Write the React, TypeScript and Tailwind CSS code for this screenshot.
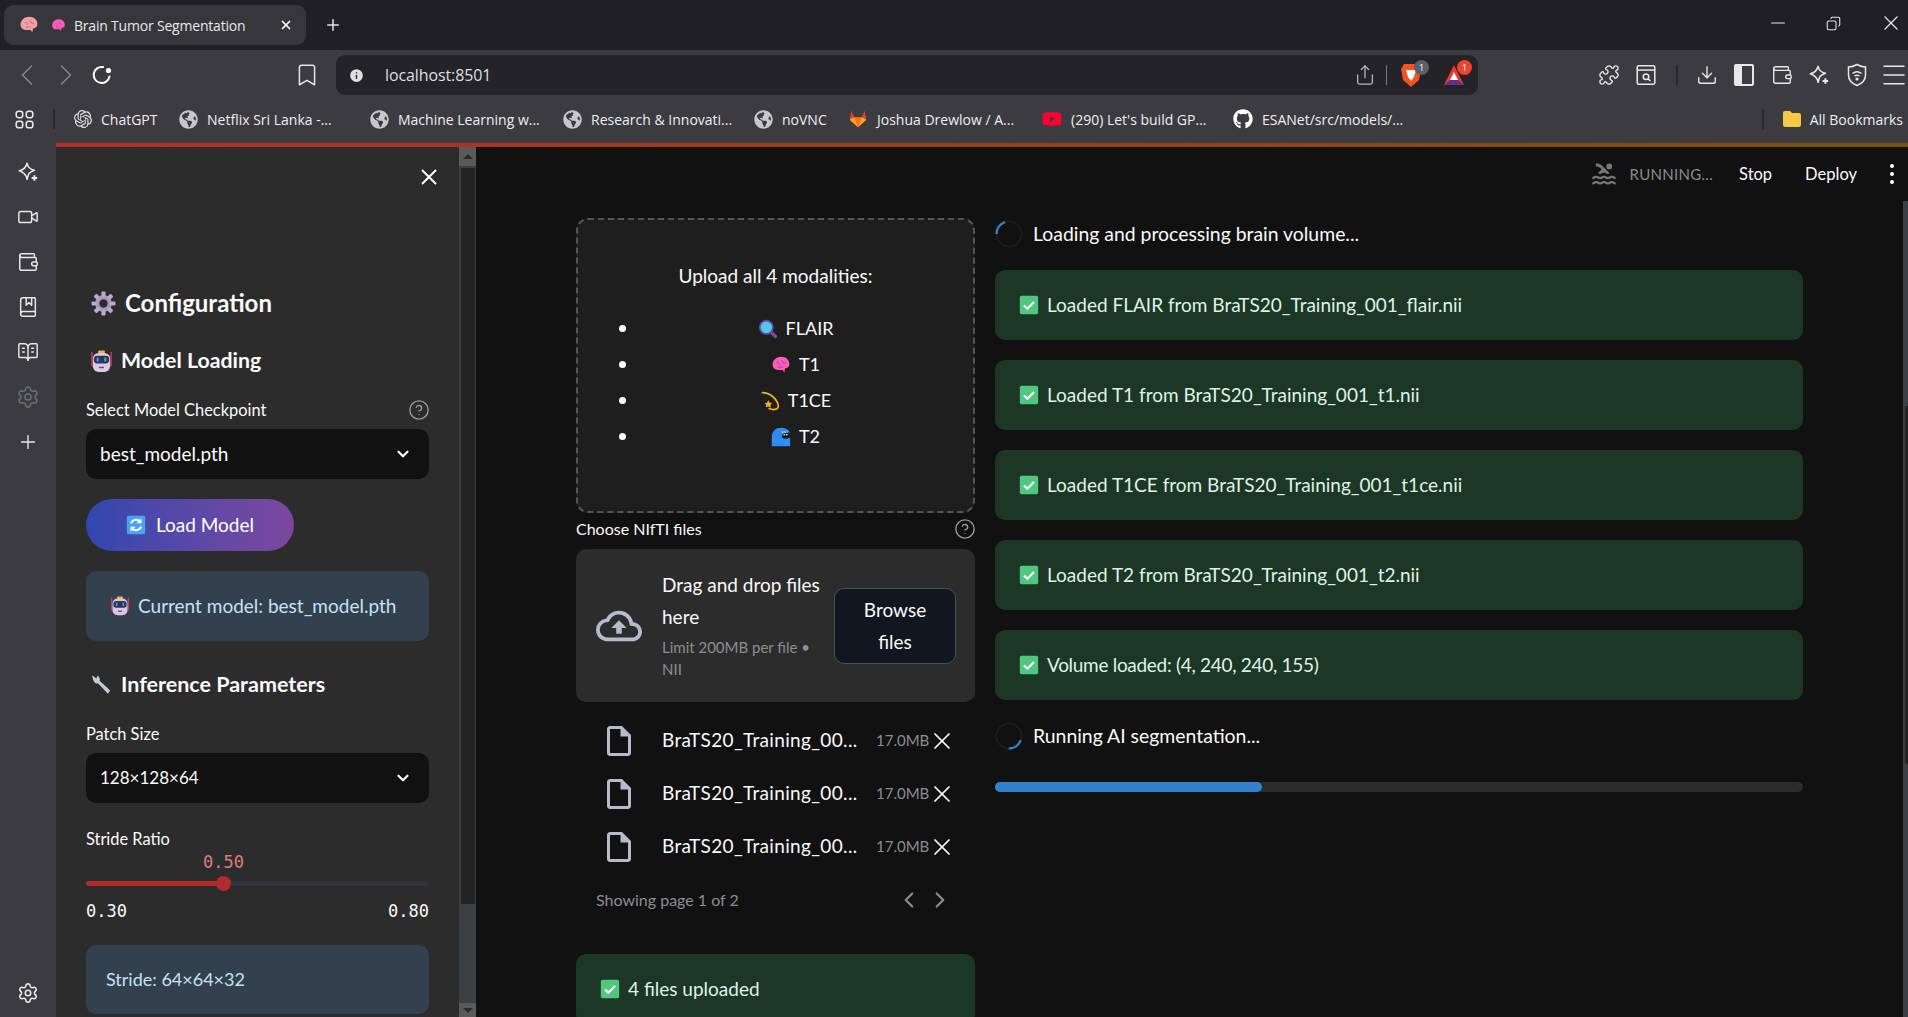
import { ChevronDown, ChevronLeft, ChevronRight, X, Plus, Minus, Copy, CircleHelp, Settings, Bookmark, Share, Puzzle, Download, Wallet, Video, BookMarked, BookOpenText, Menu, Info } from 'lucide-react'
import { FaGithub, FaGlobeAmericas, FaYoutube } from 'react-icons/fa'
import { SiOpenai } from 'react-icons/si'
import { MdOutlineCloudUpload, MdOutlineInsertDriveFile, MdPool } from 'react-icons/md'

const bookmarks = [
  { name: 'ChatGPT', icon: <SiOpenai className="w-[18px] h-[18px] text-[#e4e4e6]" />, w: 'w-[105px]' },
  { name: 'Netflix Sri Lanka -...', icon: <FaGlobeAmericas className="w-[19px] h-[19px] text-[#c8c8cc]" />, w: 'w-[191px]' },
  { name: 'Machine Learning w...', icon: <FaGlobeAmericas className="w-[19px] h-[19px] text-[#c8c8cc]" />, w: 'w-[193px]' },
  { name: 'Research & Innovati...', icon: <FaGlobeAmericas className="w-[19px] h-[19px] text-[#c8c8cc]" />, w: 'w-[191px]' },
  { name: 'noVNC', icon: <FaGlobeAmericas className="w-[19px] h-[19px] text-[#c8c8cc]" />, w: 'w-[94px]' },
  { name: 'Joshua Drewlow / A...', icon: <GitlabLogo />, w: 'w-[194px]' },
  { name: "(290) Let's build GP...", icon: <FaYoutube className="w-[20px] h-[20px] text-[#ff0033]" />, w: 'w-[191px]' },
  { name: 'ESANet/src/models/...', icon: <FaGithub className="w-[20px] h-[20px] text-white" />, w: 'w-[200px]' },
]

function GitlabLogo() {
  return (
    <svg viewBox="0 0 24 24" className="w-[20px] h-[22px] shrink-0">
      <path d="M12 22 2 13l2-11 3.500 8h9L20 2l2 11z" fill="#e24329" />
      <path d="M12 22 7.500 10h9z" fill="#fc6d26" />
      <path d="M12 22 2 13l1.500-1L7.500 10zM12 22l10-9-1.500-1-4-2z" fill="#fca326" />
    </svg>
  )
}

function Sparkle({ className }: { className?: string }) {
  return (
    <svg viewBox="0 0 24 24" fill="none" stroke="currentColor" strokeWidth="1.700" strokeLinejoin="round" className={className}>
      <path d="M11 2.500c.8 4.300 2.700 6.500 8 7.700-3.600 1.300-4.800 2-6 3.500-.8 1.200-1.200 3-2 6.300-.9-5.300-3-7.600-8.500-9.300C8 9.300 10 7 11 2.500z" />
      <path d="M19 15.500v6M16 18.500h6" strokeWidth="2.200" />
    </svg>
  )
}

function BrainEmoji({ className, pale }: { className?: string; pale?: boolean }) {
  const fill = pale ? '#f2a0a6' : '#f45fb8'
  const dark = pale ? '#d9737d' : '#d63f9c'
  return (
    <svg viewBox="0 0 24 24" className={className}>
      <path d="M2 13C1 7 6 2 12 2s11 4 10 10c-.5 3-3 4-5 4l-1 5-2-3H8c-3 0-5.500-2-6-5z" fill={fill} />
      <path d="M7 8c2 1 3 2 3 4M13 6c0 3 2 4 5 4M8 15c2-1 4-1 6 0" stroke={dark} strokeWidth="1.300" fill="none" />
    </svg>
  )
}

function GearEmoji({ className }: { className?: string }) {
  return (
    <svg viewBox="0 0 24 24" className={className}>
      <circle cx="12" cy="12" r="8" fill="#a998c0" />
      {[0, 45, 90, 135, 180, 225, 270, 315].map(a => (
        <rect key={a} x="10" y="0.500" width="4" height="5" rx="1" fill="#b9aacd" transform={`rotate(${a} 12 12)`} />
      ))}
      <circle cx="12" cy="12" r="4" fill="#2c2c2c" />
    </svg>
  )
}

function RobotEmoji({ className }: { className?: string }) {
  return (
    <svg viewBox="0 0 24 24" className={className}>
      <path d="M2 2v15M22 2v15" stroke="#e6365f" strokeWidth="1.400" />
      <rect x="8.500" y="0.500" width="7" height="3" rx="1" fill="#f4b23e" />
      <rect x="3" y="3" width="18" height="20" rx="6" fill="#dcc8e6" />
      <rect x="4" y="6" width="16" height="8" rx="3.500" fill="#2f3550" />
      <rect x="7" y="8" width="2" height="4" fill="#39a9f2" />
      <rect x="15" y="8" width="2" height="4" fill="#39a9f2" />
      <rect x="9.500" y="17.500" width="5" height="1.500" fill="#5b4a68" />
    </svg>
  )
}

function RefreshEmoji({ className }: { className?: string }) {
  return (
    <svg viewBox="0 0 24 24" className={className}>
      <rect x="1" y="1" width="22" height="22" rx="2" fill="#4aa3f0" />
      <path d="M6 10a6.500 6.500 0 0 1 11-2M18 14a6.500 6.500 0 0 1-11 2" stroke="#fff" strokeWidth="2.400" fill="none" />
      <path d="M18.500 4v6h-6zM5.500 20v-6h6z" fill="#fff" />
    </svg>
  )
}

function WrenchEmoji({ className }: { className?: string }) {
  return (
    <svg viewBox="0 0 24 24" className={className}>
      <path d="M2.500 2.500 7 6l1-3c2 1 3.500 3 2.500 5.500L22 19l-2.500 3.500L9 11.500C6 12 3 10 2.500 2.500z" fill="#c5cbd6" />
    </svg>
  )
}

function MagnifierEmoji({ className }: { className?: string }) {
  return (
    <svg viewBox="0 0 24 24" className={className}>
      <path d="M15 15l6 6" stroke="#7a4a93" strokeWidth="4" strokeLinecap="round" />
      <circle cx="10" cy="10" r="8" fill="#55c5e8" stroke="#5b4aa3" strokeWidth="2" />
    </svg>
  )
}

function CometEmoji({ className }: { className?: string }) {
  return (
    <svg viewBox="0 0 24 24" className={className}>
      <path d="M3 2c8 0 18 7 19 16 0 5-7 5-11 3" stroke="#f5b01e" strokeWidth="2" fill="none" strokeLinecap="round" />
      <path d="M10 11l1.500 3 3 .5-2 2.500.5 3-3-1.500-3 1 .5-3-2-2 3-.5z" fill="#f5b01e" />
    </svg>
  )
}

function WaveEmoji({ className }: { className?: string }) {
  return (
    <svg viewBox="0 0 24 24" className={className}>
      <path d="M1 23V12C1 5 6 1 12 1c5 0 9 2 11 6-5-1-9 0-10 4-.5 3 4 4 10 2v10z" fill="#2f8cf0" />
      <path d="M13 6h7M15 9h6" stroke="#c9e6fb" strokeWidth="1.500" strokeDasharray="2 1" />
    </svg>
  )
}

function CheckEmoji({ className }: { className?: string }) {
  return (
    <svg viewBox="0 0 24 24" className={className}>
      <rect x="1" y="1" width="22" height="22" rx="2" fill="#4fc77f" />
      <path d="M6 12.500l4 4 8-8" stroke="#fff" strokeWidth="2.600" fill="none" />
    </svg>
  )
}

function Spinner({ rotate }: { rotate: string }) {
  return (
    <svg viewBox="0 0 28 28" className={`w-[28px] h-[28px] shrink-0 ${rotate}`}>
      <circle cx="14" cy="14" r="12.500" stroke="#1a1c20" strokeWidth="2" fill="none" />
      <path d="M1.500 14A12.500 12.500 0 0 1 10 2.200" stroke="#3182cc" strokeWidth="2.400" fill="none" />
    </svg>
  )
}

function SelectBox({ value, size }: { value: string; size: string }) {
  return (
    <div className={`h-[50px] rounded-[10px] bg-[#111111] pl-[14px] pr-[17px] flex items-center justify-between text-[#fafafa] ${size}`}>
      <span>{value}</span>
      <ChevronDown className="w-[18px] h-[18px]" strokeWidth={3} />
    </div>
  )
}

function Alert({ text, tight }: { text: string; tight?: boolean }) {
  return (
    <div className="h-[70px] rounded-[10px] bg-[#1c3726] px-[24px] flex items-center gap-[8px] text-[19px] text-[#dff3e4]">
      <CheckEmoji className="w-[20px] h-[20px] shrink-0" />
      <span className={tight ? 'tracking-[-0.3px]' : ''}>{text}</span>
    </div>
  )
}

function FileRow() {
  return (
    <div className="h-[53px] flex items-center pl-[25px]">
      <MdOutlineInsertDriveFile className="w-[36px] h-[36px] text-[#b8bacb] shrink-0" />
      <span className="ml-[25px] w-[200px] shrink-0 text-[19px] tracking-[0.35px] text-[#fafafa] whitespace-nowrap">BraTS20_Training_00...</span>
      <span className="ml-[14px] text-[15px] text-[#8c8d92]">17.0MB</span>
      <X className="w-[28px] h-[28px] -ml-[1px] shrink-0 text-white" strokeWidth={1.500} />
    </div>
  )
}

export default function App() {
  return (
    <div className="w-[1908px] h-[1017px] overflow-hidden flex flex-col bg-[#111111] font-['Lato',sans-serif]">
      {/* tab strip */}
      <div className="h-[50px] bg-[#1f1f24] flex items-center pl-[4px] shrink-0 font-['Open_Sans',sans-serif]">
        <div className="w-[302px] h-[40px] rounded-[9px] bg-[#36363b] flex items-center pl-[15px] pr-[13px] text-[14px] text-[#e8e8ea]">
          <BrainEmoji pale className="w-[20px] h-[20px] shrink-0" />
          <BrainEmoji className="w-[15px] h-[15px] shrink-0 ml-[12px]" />
          <span className="ml-[8px] tracking-[-0.2px] whitespace-nowrap">Brain Tumor Segmentation</span>
          <X className="w-[14px] h-[14px] ml-auto text-white" strokeWidth={3} />
        </div>
        <Plus className="w-[18px] h-[18px] ml-[18px] text-[#e4e4e6]" />
        <div className="ml-auto mb-[4px] flex items-center text-[#e6e6e8]">
          <Minus className="w-[22px] h-[22px]" strokeWidth={1.300} />
          <Copy className="w-[15px] h-[15px] ml-[37px] -scale-x-100" strokeWidth={1.700} />
          <X className="w-[24px] h-[24px] ml-[38px] mr-[5px]" strokeWidth={1.300} />
        </div>
      </div>

      {/* toolbar */}
      <div className="h-[45px] pt-[5px] bg-[#3b3b40] flex items-center shrink-0 font-['Open_Sans',sans-serif]">
        <ChevronLeft className="w-[36px] h-[36px] shrink-0 ml-[9px] text-[#85858a]" strokeWidth={1} />
        <ChevronRight className="w-[36px] h-[36px] shrink-0 ml-[3px] text-[#85858a]" strokeWidth={1} />
        <svg viewBox="0 0 24 24" fill="none" className="w-[24px] h-[24px] shrink-0 ml-[6px] text-white">
          <path d="M19.500 13.500A8 8 0 1 1 13 4.100" stroke="currentColor" strokeWidth="2" strokeLinecap="round" />
          <circle cx="18.500" cy="7.500" r="2.600" fill="currentColor" />
        </svg>
        <Bookmark className="w-[26px] h-[26px] shrink-0 ml-[180px] text-[#e4e4e6]" strokeWidth={1.400} />
        <div className="w-[1142px] h-[40px] shrink-0 ml-[16px] rounded-[9px] bg-[#232328] flex items-center text-[#dfdfe2] text-[16px] pl-[12px]">
          <Info className="w-[17px] h-[17px] fill-[#dedee0] text-[#232328]" />
          <span className="ml-[20px] tracking-[-0.1px]">localhost:8501</span>
          <Share className="w-[22px] h-[22px] ml-auto text-[#b8b8bc]" strokeWidth={1.400} />
          <div className="w-px h-[20px] bg-[#77777c] ml-[10px]" />
          <div className="relative ml-[14px] w-[20px] h-[24px]">
            <svg viewBox="0 0 20 24" className="w-[20px] h-[24px]">
              <path d="M3 1h14l3 5-2 11-8 7-8-7L0 6z" fill="#f1541e" />
              <path d="M5 7h10l-2 7-3 4-3-4z" fill="#fff" />
            </svg>
            <span className="absolute -top-[3px] left-[13px] w-[15px] h-[15px] rounded-full bg-[#5c5e69] text-[9px] leading-[15px] text-center text-white">1</span>
          </div>
          <div className="relative ml-[23px] w-[20px] h-[20px]">
            <svg viewBox="0 0 20 20" className="w-[20px] h-[20px]">
              <path d="M10 0 20 20H0z" fill="#e6392f" />
              <path d="M10 7l4 8H6z" fill="#fff" />
              <path d="M0 20l6-5h8l6 5z" fill="#662d91" />
            </svg>
            <span className="absolute -top-[5px] left-[13px] w-[15px] h-[15px] rounded-full bg-[#f0432f] text-[9px] leading-[15px] text-center text-white">1</span>
          </div>
          <div className="w-[14px] shrink-0" />
        </div>
        <div className="flex items-center shrink-0 ml-[112px] text-[#e8e8ea] [&>div]:flex [&>div]:justify-center [&>div]:w-[37.5px]">
          <div><Puzzle className="w-[22px] h-[22px]" strokeWidth={1.500} /></div>
          <div>
            <svg viewBox="0 0 20 20" fill="none" stroke="currentColor" strokeWidth="1.400" className="w-[22px] h-[22px]">
              <rect x="2" y="1.500" width="16" height="17" rx="1.500" />
              <path d="M2 5.500h16" />
              <circle cx="10" cy="11.500" r="2.500" />
              <path d="M12 13.500l2 2" />
            </svg>
          </div>
          <span className="w-[23px] flex justify-center"><span className="w-[2px] h-[20px] bg-[#29292d]" /></span>
          <div><Download className="w-[22px] h-[22px]" strokeWidth={1.500} /></div>
          <div><span className="w-[20px] h-[22px] border-2 border-[#e8e8ea] rounded-[2px] bg-gradient-to-r from-[#e8e8ea] from-40% to-transparent to-40%" /></div>
          <div><Wallet className="w-[22px] h-[22px]" strokeWidth={1.500} /></div>
          <div><Sparkle className="w-[22px] h-[22px]" /></div>
          <div>
            <svg viewBox="0 0 24 24" fill="none" stroke="currentColor" strokeWidth="1.500" className="w-[24px] h-[24px]">
              <path d="M12 1.500c3 1.700 5.500 2.500 8.500 2.500v8c0 5-3.500 8.500-8.500 10.500C7 20.500 3.500 17 3.500 12V4c3 0 5.500-.8 8.500-2.500z" />
              <path d="M7.500 10.500c2.700-2.200 6.300-2.200 9 0M9.500 13c1.500-1 3.500-1 5 0" />
              <circle cx="12" cy="16" r="0.800" fill="currentColor" />
            </svg>
          </div>
          <div><Menu className="w-[30px] h-[30px] shrink-0" strokeWidth={1.200} /></div>
        </div>
      </div>

      {/* bookmarks */}
      <div className="h-[48px] bg-[#3b3b40] flex items-center text-[14px] text-[#eeeef0] shrink-0 font-['Open_Sans',sans-serif]">
        <svg viewBox="0 0 16 16" fill="none" stroke="#e8e8ea" strokeWidth="1.300" className="w-[19px] h-[19px] ml-[15px]">
          <rect x="1" y="1" width="5.500" height="5.500" rx="2" />
          <rect x="9.500" y="1" width="5.500" height="5.500" rx="2" />
          <rect x="1" y="9.500" width="5.500" height="5.500" rx="2" />
          <rect x="9.500" y="9.500" width="5.500" height="5.500" rx="2" />
        </svg>
        <div className="w-[2px] h-[20px] bg-[#29292d] ml-[19px] mr-[19px]" />
        {bookmarks.map(b => (
          <div key={b.name} className={`${b.w} flex items-center gap-[9px] shrink-0 whitespace-nowrap`}>
            {b.icon}
            <span>{b.name}</span>
          </div>
        ))}
        <div className="ml-auto w-[2px] h-[20px] bg-[#29292d]" />
        <svg viewBox="0 0 20 18" className="w-[20px] h-[18px] ml-[18px]">
          <path d="M1 3a2 2 0 0 1 2-2h5l2 2h7a2 2 0 0 1 2 2v10a2 2 0 0 1-2 2H3a2 2 0 0 1-2-2z" fill="#f6c945" />
        </svg>
        <span className="ml-[8px] mr-[5px] whitespace-nowrap">All Bookmarks</span>
      </div>

      <div className="flex-1 min-h-0 flex">
        {/* brave side rail */}
        <div className="w-[56px] bg-[#3b3b40] flex flex-col items-center pt-[18px] pb-[13px] text-[#e8e8ea] shrink-0">
          <Sparkle className="w-[22px] h-[22px]" />
          <Video className="w-[22px] h-[22px] mt-[23px]" strokeWidth={1.600} />
          <Wallet className="w-[22px] h-[22px] mt-[23px]" strokeWidth={1.600} />
          <BookMarked className="w-[22px] h-[22px] mt-[23px]" strokeWidth={1.600} />
          <BookOpenText className="w-[22px] h-[22px] mt-[23px]" strokeWidth={1.600} />
          <Settings className="w-[24px] h-[24px] mt-[22px] text-[#6b6f7c]" strokeWidth={1.500} />
          <Plus className="w-[22px] h-[22px] mt-[22px]" strokeWidth={1.500} />
          <Settings className="w-[22px] h-[22px] mt-auto" strokeWidth={1.700} />
        </div>

        <div className="flex-1 min-w-0 flex flex-col">
          <div className="h-[4px] shrink-0 bg-gradient-to-r from-[#b52c24] via-[#9a3f1c] to-[#7c5010]" />
          <div className="flex-1 min-h-0 flex">
            {/* streamlit sidebar */}
            <div className="w-[403px] shrink-0 bg-[#2c2c2c] px-[30px] text-[#fafafa]">
              <div className="h-[38px] flex justify-end pt-[17px] -mr-[13px]">
                <X className="w-[26px] h-[26px] shrink-0 text-white" strokeWidth={1.800} />
              </div>
              <div className="mt-[103px] flex items-center h-[30px] pl-[5px] gap-[9px] text-[24px] font-bold whitespace-nowrap">
                <GearEmoji className="w-[25px] h-[25px]" />
                <span>Configuration</span>
              </div>
              <div className="mt-[28px] flex items-center h-[30px] pl-[4px] gap-[8px] text-[21.300px] font-bold whitespace-nowrap">
                <RobotEmoji className="w-[23px] h-[23px]" />
                <span>Model Loading</span>
              </div>
              <div className="mt-[21px] h-[26px] flex items-center justify-between text-[16.400px]">
                <span>Select Model Checkpoint</span>
                <CircleHelp className="w-[22px] h-[22px] -mr-[1px] text-[#9a9a9e]" strokeWidth={1.500} />
              </div>
              <div className="mt-[6px]"><SelectBox value="best_model.pth" size="text-[19px]" /></div>
              <div className="mt-[20px] w-[208px] h-[52px] rounded-full bg-gradient-to-r from-[#2f46b0] to-[#7c479e] flex items-center justify-center gap-[10px] text-[19px] text-white">
                <RefreshEmoji className="w-[20px] h-[20px]" />
                <span>Load Model</span>
              </div>
              <div className="mt-[20px] h-[70px] rounded-[10px] bg-[#33404d] flex items-center pl-[24px] gap-[8px] text-[19px] text-[#c7e1f5] whitespace-nowrap">
                <RobotEmoji className="w-[20px] h-[20px]" />
                <span>Current model: best_model.pth</span>
              </div>
              <div className="mt-[28px] flex items-center h-[30px] pl-[4px] gap-[9px] text-[21.500px] font-bold whitespace-nowrap">
                <WrenchEmoji className="w-[22px] h-[22px]" />
                <span>Inference Parameters</span>
              </div>
              <div className="mt-[22px] h-[26px] flex items-center text-[16.400px]">Patch Size</div>
              <div className="mt-[6px]"><SelectBox value="128×128×64" size="text-[17px]" /></div>
              <div className="mt-[23px] h-[26px] flex items-center text-[16.400px]">Stride Ratio</div>
              <div className="relative h-[93px] -mt-[1px] font-['DejaVu_Sans_Mono',monospace] text-[17px]">
                <div className="absolute left-[117px] -top-[1px] text-[#de7c7c] leading-[24px]">0.50</div>
                <div className="absolute left-0 right-0 top-[30px] h-[5px] rounded-full bg-[#33353b]" />
                <div className="absolute left-0 w-[137px] top-[30px] h-[5px] rounded-full bg-[#b22a2a]" />
                <div className="absolute left-[130px] top-[25px] w-[15px] h-[15px] rounded-full bg-[#b22a2a]" />
                <div className="absolute left-0 top-[48px] leading-[24px]">0.30</div>
                <div className="absolute right-0 top-[48px] leading-[24px]">0.80</div>
              </div>
              <div className="mt-[1px] h-[69px] rounded-[10px] bg-[#33404d] flex items-center pl-[20px] text-[18px] text-[#c7e1f5]">Stride: 64×64×32</div>
            </div>

            {/* sidebar scrollbar */}
            <div className="w-[17px] shrink-0 bg-[#3d4043] flex flex-col">
              <div className="h-[19px] bg-[#5a5a5a] flex items-center justify-center">
                <div className="w-0 h-0 border-x-[5px] border-x-transparent border-b-[5px] border-b-[#2c2c2c]" />
              </div>
              <div className="h-[2px]" />
              <div className="h-[736px] ml-[2px] mr-[1px] bg-[#232323]" />
              <div className="flex-1" />
              <div className="h-[14px] bg-[#5a5a5a] flex items-center justify-center">
                <div className="w-0 h-0 border-x-[5px] border-x-transparent border-t-[5px] border-t-[#2c2c2c]" />
              </div>
            </div>

            {/* main area */}
            <div className="relative flex-1 min-w-0 bg-[#111111] pt-[71px] pl-[100px] pr-[105px] text-[#fafafa]">
              <div className="absolute top-[4px] right-0 h-[46px] flex items-center text-[16.500px]">
                <MdPool className="w-[28px] h-[28px] text-[#777]" />
                <span className="ml-[12px] text-[#8a8a8f] tracking-[0.3px] text-[15px]">RUNNING...</span>
                <span className="ml-[26px]">Stop</span>
                <span className="ml-[33px]">Deploy</span>
                <div className="ml-[33px] mr-[14px] flex flex-col gap-[4px]">
                  <div className="w-[4px] h-[4px] rounded-full bg-white" />
                  <div className="w-[4px] h-[4px] rounded-full bg-white" />
                  <div className="w-[4px] h-[4px] rounded-full bg-white" />
                </div>
              </div>

              {/* page scrollbar */}
              <div className="absolute right-0 top-[54px] bottom-0 w-[5px] bg-[#3d4043]">
                <div className="absolute left-[2px] right-0 top-[205px] h-[358px] rounded-l-[2px] bg-[#232323]" />
              </div>

              <div className="flex gap-[20px] items-start">
                {/* left column */}
                <div className="w-[399px] shrink-0">
                  <div className="h-[295px] rounded-[12px] border-2 border-dashed border-[#555555] bg-[#1e1e1e] px-[22px] pt-[32px] text-center text-[18px]">
                    <div className="h-[48px] leading-[48px] text-[19px]">Upload all 4 modalities:</div>
                    <ul className="list-disc pl-[40px] mt-[9px] marker:text-[22px] [&>li]:h-[36px] [&>li]:leading-[36px]">
                      <li><MagnifierEmoji className="inline-block w-[20px] h-[20px] mr-[8px] align-[-4px]" />FLAIR</li>
                      <li><BrainEmoji className="inline-block w-[20px] h-[20px] mr-[8px] align-[-4px]" />T1</li>
                      <li><CometEmoji className="inline-block w-[20px] h-[20px] mr-[8px] align-[-4px]" />T1CE</li>
                      <li><WaveEmoji className="inline-block w-[20px] h-[20px] mr-[8px] align-[-4px]" />T2</li>
                    </ul>
                  </div>
                  <div className="h-[32px] mb-[4px] flex items-center justify-between text-[16px]">
                    <span>Choose NIfTI files</span>
                    <CircleHelp className="w-[22px] h-[22px] -mr-[1px] text-[#9a9a9e]" strokeWidth={1.500} />
                  </div>
                  <div className="h-[153px] rounded-[10px] bg-[#2c2c2c] flex items-center pl-[20px] pr-[20px]">
                    <MdOutlineCloudUpload className="w-[46px] h-[46px] text-[#b8bacb] shrink-0" />
                    <div className="ml-[20px] w-[172px] shrink-0">
                      <div className="-mt-[3px] mb-[3px] text-[19px] leading-[32px]">Drag and drop files here</div>
                      <div className="text-[15px] leading-[22px] text-[#8c8d92]">Limit 200MB per file •<br />NII</div>
                    </div>
                    <div className="ml-auto w-[122px] h-[76px] shrink-0 rounded-[10px] bg-[#111720] border border-[#4e5058] flex items-center justify-center text-center text-[19px] leading-[32px]">Browse<br />files</div>
                  </div>
                  <div className="mt-[12px]">
                    <FileRow />
                    <FileRow />
                    <FileRow />
                  </div>
                  <div className="h-[53px] flex items-center pl-[20px] pr-[22px] text-[16px] text-[#8c8d92]">
                    <span>Showing page 1 of 2</span>
                    <ChevronLeft className="w-[26px] h-[26px] ml-auto" strokeWidth={2} />
                    <ChevronRight className="w-[26px] h-[26px] ml-[5px]" strokeWidth={2} />
                  </div>
                  <div className="mt-[28px] h-[70px] rounded-[10px] bg-[#1c3726] px-[24px] flex items-center gap-[8px] text-[19px] text-[#dff3e4]">
                    <CheckEmoji className="w-[20px] h-[20px] shrink-0" />
                    <span>4 files uploaded</span>
                  </div>
                </div>

                {/* right column */}
                <div className="flex-1 min-w-0">
                  <div className="h-[32px] mb-[20px] flex items-center gap-[10px] text-[19.400px]">
                    <Spinner rotate="" />
                    <span>Loading and processing brain volume...</span>
                  </div>
                  <div className="flex flex-col gap-[20px]">
                    <Alert text="Loaded FLAIR from BraTS20_Training_001_flair.nii" />
                    <Alert text="Loaded T1 from BraTS20_Training_001_t1.nii" />
                    <Alert text="Loaded T1CE from BraTS20_Training_001_t1ce.nii" />
                    <Alert text="Loaded T2 from BraTS20_Training_001_t2.nii" />
                    <Alert text="Volume loaded: (4, 240, 240, 155)" tight />
                  </div>
                  <div className="mt-[22px] h-[28px] flex items-center gap-[10px] text-[19.400px]">
                    <Spinner rotate="rotate-[200deg]" />
                    <span>Running AI segmentation...</span>
                  </div>
                  <div className="mt-[32px] h-[10px] rounded-full bg-[#2c2c2c]">
                    <div className="h-full w-[267px] rounded-full bg-[#3182cc]" />
                  </div>
                </div>
              </div>
            </div>
          </div>
        </div>
      </div>
    </div>
  )
}
